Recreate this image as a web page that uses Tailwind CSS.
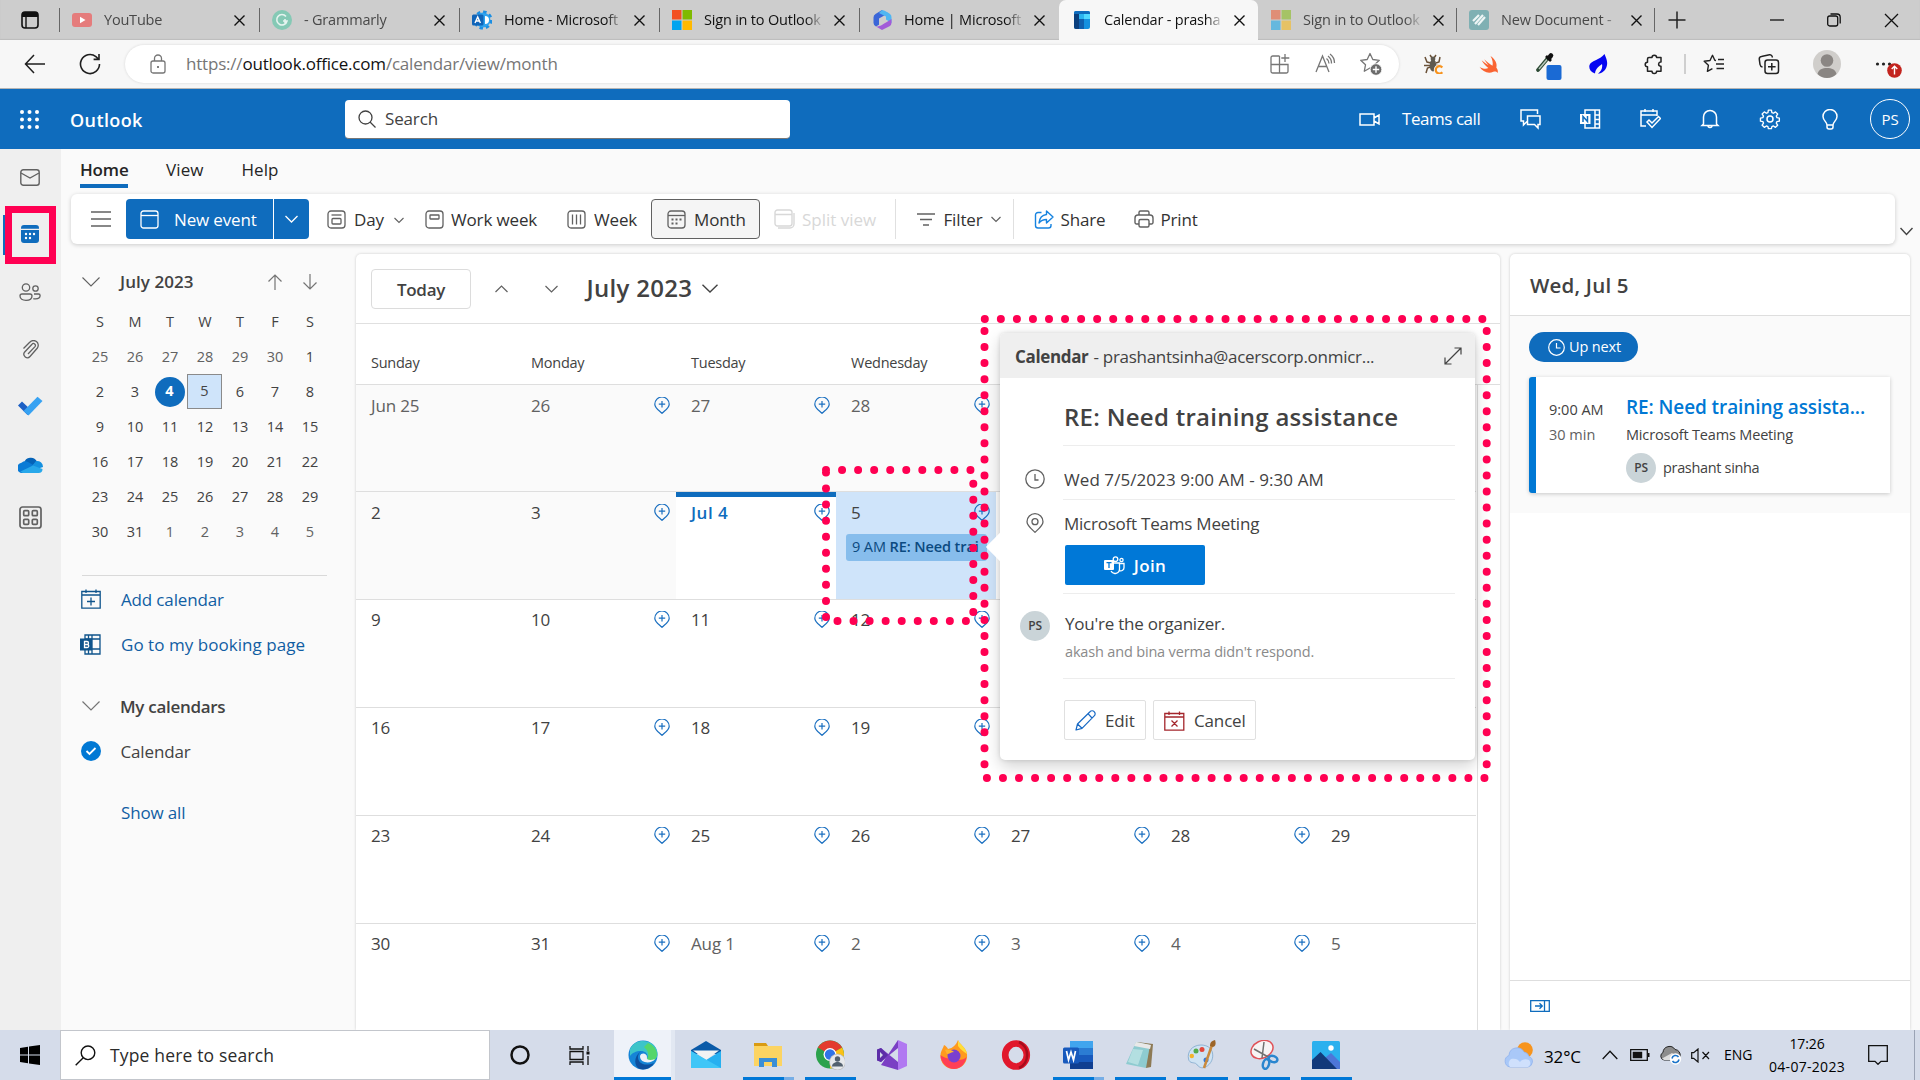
<!DOCTYPE html>
<html lang="en">
<head>
<meta charset="utf-8">
<title>Calendar - prashant sinha - Outlook</title>
<script src="https://cdn.jsdelivr.net/npm/@tailwindcss/browser@4"></script>
</head>
<body class="relative flex h-[1080px] w-[1920px] flex-col overflow-hidden bg-[#fafafa] font-['Open_Sans','Noto_Sans',sans-serif] text-[17px] leading-none tracking-[-0.15px] text-[#424242]">

<!-- Browser tab strip -->
<div class="flex h-10 shrink-0 items-stretch bg-[#cdcdcd] text-[14.5px] shadow-[inset_0_-1px_1px_#bdbdbd]">
  <div class="flex w-[59px] items-center justify-center">
    <svg width="18" height="18" viewBox="0 0 18 18"><rect x="1" y="1" width="16" height="16" rx="3" fill="none" stroke="#111" stroke-width="1.6"/><path d="M1 4a3 3 0 0 1 3-3h10a3 3 0 0 1 3 3v2H1z" fill="#111"/><path d="M5 6v11" stroke="#111" stroke-width="1.4"/></svg>
  </div>
  <div id="tabs" class="flex"></div>
  <div class="flex items-center"><i class="h-[24px] w-px bg-[#666]"></i></div>
  <svg class="mt-[10px] ml-[12px]" width="20" height="20" viewBox="0 0 20 20"><path d="M10 1.500v17M1.500 10h17" stroke="#222" stroke-width="1.500"/></svg>
  <div class="ml-auto flex items-center pr-[21px]">
    <svg width="14" height="14" viewBox="0 0 14 14"><path d="M0 7h14" stroke="#111" stroke-width="1.300"/></svg>
    <svg class="ml-[43px]" width="14" height="14" viewBox="0 0 14 14"><rect x=".7" y="3" width="10" height="10" rx="2" fill="none" stroke="#111" stroke-width="1.300"/><path d="M3.500 1h6.500a3.200 3.200 0 0 1 3.200 3.200v6.300" fill="none" stroke="#111" stroke-width="1.300"/></svg>
    <svg class="ml-[43px]" width="15" height="15" viewBox="0 0 15 15"><path d="M1 1l13 13M14 1 1 14" stroke="#111" stroke-width="1.300"/></svg>
  </div>
</div>

<!-- Address bar -->
<div class="flex h-[49px] shrink-0 items-center border-b border-[#b5b5b5] bg-[#f7f7f7] text-[#222]">
  <svg class="ml-[24px]" width="22" height="20" viewBox="0 0 22 20" fill="none" stroke="#1f1f1f" stroke-width="1.500"><path d="M10 1 1.500 10 10 19M1.500 10H21"/></svg>
  <svg class="ml-[33px]" width="22" height="22" viewBox="0 0 22 22" fill="none" stroke="#1f1f1f" stroke-width="1.600"><path d="M20.500 11a9.500 9.500 0 1 1-3.600-7.400l2.600 2.400M20 1v5.400h-5.400"/></svg>
  <div class="ml-[24px] flex h-[38px] w-[1274px] items-center rounded-full bg-white pr-[16px] shadow-[0_0_3px_#00000022]">
    <svg class="ml-[25px]" width="16" height="20" viewBox="0 0 16 20" fill="none" stroke="#767676" stroke-width="1.300"><rect x="1" y="7" width="14" height="12" rx="2"/><path d="M4.500 7V4.500a3.500 3.500 0 0 1 7 0V7"/><circle cx="8" cy="13" r="1" fill="#555" stroke="none"/></svg>
    <p class="mb-[2px] ml-[20px] tracking-[-0.2px] text-[#767676]">https://<span class="text-[#111]">outlook.office.com</span>/calendar/view/month</p>
    <div class="ml-auto flex items-center gap-[23px]">
      <svg width="22" height="22" viewBox="0 0 22 22" fill="none" stroke="#767676" stroke-width="1.300"><path d="M10.500 3H3.700A1.700 1.700 0 0 0 2 4.700v13.600A1.700 1.700 0 0 0 3.700 20h13.600a1.700 1.700 0 0 0 1.700-1.700V11.500H2M10.500 3v17M16 1v8M12.300 5h8"/></svg>
      <svg width="22" height="22" viewBox="0 0 22 22" fill="none" stroke="#767676" stroke-width="1.300"><path d="M2 19 8.500 3 15 19M4.200 13.500h8.600M12.500 5.500a6 6 0 0 1 2.500 5M14 3a9 9 0 0 1 3.500 7.500M16 1a11 11 0 0 1 4.500 9"/></svg>
      <svg width="24" height="24" viewBox="0 0 24 24"><path d="M11 1.500l2.800 6 6.500.8-4.800 4.500 1.200 6.400L11 16l-5.700 3.200 1.200-6.400L1.700 8.300l6.500-.8z" fill="none" stroke="#767676" stroke-width="1.300" stroke-linejoin="round"/><circle cx="17" cy="17.500" r="5.800" fill="#6b6b6b" stroke="#fff" stroke-width=".8"/><path d="M17 14.300v6.400M13.800 17.500h6.400" stroke="#fff" stroke-width="1.400"/></svg>
    </div>
  </div>
  <svg class="ml-[25px]" width="20" height="20" viewBox="0 0 20 20"><path d="M6 1 8 4M12 1 10 4M1 3l2 5 4 1M16 3l-1 5-3 1M0 11.500h6M2 19l1.500-5 3-1M12 11.500h5" stroke="#6a5138" stroke-width="1.500" fill="none"/><ellipse cx="9" cy="11.500" rx="3.300" ry="6" fill="#5f5a50"/><circle cx="9" cy="5" r="2.400" fill="#5f5a50"/><path d="M18.300 13.500a3.700 3.700 0 1 0 0 4.800" fill="none" stroke="#f7f7f7" stroke-width="4"/><path d="M18.300 13.500a3.700 3.700 0 1 0 0 4.800" fill="none" stroke="#f7931e" stroke-width="2.200"/></svg>
  <svg class="ml-[35px]" width="20" height="19" viewBox="0 0 20 19"><path d="M11.500 1c5 3.500 7 8 5.800 11.500 1.900 2.300 1.700 4.300 1.300 5.500-1.300-2-3-1.800-4.300-1.200C9.500 19 3.500 17 .5 11.800c3.300 2.200 6.600 2.600 8.800 1.200C6 10.500 3.800 7.500 2.600 5.200 5 7.300 7.300 9 9.500 10.300 7.800 8.200 6.300 6 5.200 4.200c3 2.900 5.800 5.100 8.300 6.500C14.200 8 13.500 4.500 11.500 1z" fill="#fa6432"/></svg>
  <svg class="mt-[4px] ml-[37px]" width="28" height="30" viewBox="0 0 28 30"><path d="M2 19 12 7" stroke="#2c4a34" stroke-width="3.600" stroke-linecap="round"/><path d="M3 18 11 8.500" stroke="#b9c8bd" stroke-width="1.400"/><path d="M10 5l5 5" stroke="#111" stroke-width="2.600"/><path d="M13 7l2-2.500" stroke="#111" stroke-width="4.600" stroke-linecap="round"/><rect x="10.500" y="14" width="15" height="15" rx="2" fill="#1a6ad4"/></svg>
  <svg class="ml-[25px]" width="19" height="20" viewBox="0 0 19 20"><path d="M15.500 0C17 4 19 7 17.800 12c-1 4.500-4.500 7-8.800 7.800 3.200-2.500 4.800-5.500 4-9.800-3 2.500-6.500 4.500-7 9.500C1.500 18 -.2 14.500.4 11.500 1.500 6.500 11 6 15.500 0z" fill="#0505f2"/></svg>
  <svg class="ml-[36px]" width="20" height="21" viewBox="0 0 20 21" fill="none" stroke="#222" stroke-width="1.500"><path d="M5 3.500h3a2.300 2.300 0 0 1 4.600 0H17v4.600a2 2 0 0 0-.5 4.200h.5v5h-4.400a2.300 2.300 0 0 1-4.600 0H3.500v-4.500a2.300 2.300 0 0 1 0-4.600V5A1.500 1.500 0 0 1 5 3.500z" stroke-linejoin="round"/></svg>
  <i class="ml-[20px] h-[20px] w-[1.5px] bg-[#cfcfcf]"></i>
  <svg class="ml-[17px]" width="22" height="20" viewBox="0 0 22 20" fill="none" stroke="#222" stroke-width="1.400"><path d="M13 6.500 11.800 6.300 9.500 1.300 7 6.500l-5.800.8 4.200 4-1 6 5-2.700M15 5.500h6M13 10h8M13.500 14.500H21" stroke-linejoin="round"/></svg>
  <svg class="ml-[33px]" width="22" height="22" viewBox="0 0 22 22" fill="none" stroke="#222" stroke-width="1.500"><rect x="7" y="7" width="13.500" height="13.500" rx="2.500"/><path d="M13.800 10v7.600M10 13.800h7.600M4.500 14A3 3 0 0 1 2 11.500L1.300 6.300a2.500 2.500 0 0 1 2.100-2.800l8-1.700A2.500 2.500 0 0 1 14.300 4v.5"/></svg>
  <svg class="ml-[33px]" width="28" height="28" viewBox="0 0 28 28"><circle cx="14" cy="14" r="14" fill="#d0cecb"/><circle cx="14" cy="10.500" r="6.300" fill="#8a8683"/><path d="M4.500 24c1-4.500 5-6 9.500-6s8.500 1.500 9.500 6c-2.500 2.600-6 4-9.500 4s-7-1.400-9.500-4z" fill="#8a8683"/></svg>
  <svg class="mt-[14px] ml-[34px]" width="28" height="28" viewBox="0 0 28 28"><g fill="#222"><circle cx="2.500" cy="7" r="1.600"/><circle cx="8.500" cy="7" r="1.600"/><circle cx="14.500" cy="7" r="1.600"/></g><circle cx="19.500" cy="13.500" r="7.300" fill="#c3241e"/><path d="M19.500 17.500v-8M16.700 12l2.800-2.800 2.800 2.800" stroke="#fff" stroke-width="1.400" fill="none"/></svg>
</div>

<!-- Outlook header -->
<div class="flex h-[60px] shrink-0 items-center bg-[#0f6cbd] text-white">
  <svg class="ml-[19px]" width="21" height="21" viewBox="0 0 21 21" fill="#fff"><g id="w"><circle cx="3" cy="3" r="2"/><circle cx="10.500" cy="3" r="2"/><circle cx="18" cy="3" r="2"/></g><use href="#w" y="7.500"/><use href="#w" y="15"/></svg>
  <p class="ml-[30px] mt-px w-[275px] text-[18px] font-semibold tracking-[0.4px]">Outlook</p>
  <div class="flex h-[39px] w-[445px] items-center rounded-[4px] border-b border-[#777] bg-white pl-[13px] text-[#424242]">
    <svg width="18" height="18" viewBox="0 0 18 18" fill="none" stroke="#424242" stroke-width="1.300"><circle cx="7.500" cy="7.500" r="6.500"/><path d="m12 12 5.500 5.500"/></svg>
    <span class="ml-[9px]">Search</span>
  </div>
  <svg class="ml-auto" width="21" height="13" viewBox="0 0 21 13" fill="none" stroke="#fff" stroke-width="1.500"><path d="M1 1h14v11H1zM15 5l5-3v9l-5-3"/></svg>
  <span class="mb-px ml-[22px] w-[98px] tracking-[-0.450px]">Teams call</span>
  <div class="flex w-[60px] justify-center"><svg width="22" height="22" viewBox="0 0 22 22" fill="none" stroke="#fff" stroke-width="1.500"><path d="M18.500 6V2H2v11h2.500v4L8 13.500M8.500 8H21v8.500h-2V20l-3.500-3.500h-7z"/></svg></div>
  <div class="flex w-[60px] justify-center"><svg width="22" height="22" viewBox="0 0 22 22" fill="none" stroke="#fff" stroke-width="1.500"><path d="M6 6V2h14.500v18H6v-4M16 2v18M16 7h4.500M16 11.500h4.500M16 16h4.500"/><rect x="1" y="6" width="10.500" height="10" fill="#fff" stroke="none"/><path d="M4 14V8.500l4.500 5V8" stroke="#0f6cbd"/></svg></div>
  <div class="flex w-[60px] justify-center"><svg width="22" height="22" viewBox="0 0 22 22" fill="none" stroke="#fff" stroke-width="1.500"><path d="M7 18H2V3h16v5M2 7h16M6 1v3M14 1v3"/><path d="m8 14 2-2 3 3 6.500-6.500 2 2L13 19.500z"/></svg></div>
  <div class="flex w-[60px] justify-center"><svg width="20" height="20" viewBox="0 0 20 20" fill="none" stroke="#fff" stroke-width="1.500"><path d="M3.500 15V8a6.500 6.500 0 0 1 13 0v7l1.500 1.500H2zM8 16.500a2 2 0 0 0 4 0"/></svg></div>
  <div class="flex w-[60px] justify-center"><svg width="22" height="22" viewBox="0 0 22 22" fill="none" stroke="#fff" stroke-width="1.500" stroke-linejoin="round"><path d="M9.300 1.500h3.400l.5 2.700 1.700.7 2.300-1.500 2.400 2.400-1.500 2.300.7 1.700 2.700.5v3.400l-2.700.5-.7 1.700 1.500 2.300-2.400 2.400-2.300-1.500-1.700.7-.5 2.200H9.300l-.5-2.200-1.700-.7-2.300 1.500-2.400-2.400 1.500-2.300-.7-1.700-2.700-.5v-3.400l2.700-.5.7-1.700L2.400 5.800l2.400-2.400 2.300 1.500 1.700-.7z" transform="translate(1 .8) scale(.9)"/><circle cx="11" cy="11" r="3"/></svg></div>
  <div class="flex w-[60px] justify-center"><svg width="16" height="21" viewBox="0 0 16 21" fill="none" stroke="#fff" stroke-width="1.500"><path d="M5 16c0-3-4-4.500-4-8.500a7 7 0 0 1 14 0c0 4-4 5.500-4 8.500zM5 16v2a2 2 0 0 0 2 2h2a2 2 0 0 0 2-2v-2"/></svg></div>
  <div class="flex w-[60px] justify-center"><div class="flex size-10 items-center justify-center rounded-full border border-white pt-px text-[15px]">PS</div></div>
</div>

<!-- Application -->
<div class="flex h-[881px] shrink-0">
  <!-- App rail -->
  <nav class="flex w-[61px] shrink-0 flex-col items-center bg-[#efefef]">
    <div class="flex h-[56px] items-center pr-px"><svg width="20" height="17" viewBox="0 0 20 17" fill="none" stroke="#616161" stroke-width="1.400"><rect x=".8" y=".8" width="18.400" height="15.400" rx="2.500"/><path d="m1 4 9 5 9-5"/></svg></div>
    <div class="relative flex h-[58px] w-full items-center justify-center pr-px">
      <i class="absolute left-[3px] top-[10px] h-[40px] w-[3px] bg-[#0f6cbd]"></i>
      <div class="absolute left-[5px] top-[1px] h-[58px] w-[51px] border-[7.500px] border-[#ff0052]"></div>
      <svg width="18" height="18" viewBox="0 0 18 18"><path d="M0 3a3 3 0 0 1 3-3h12a3 3 0 0 1 3 3v.8H0zM0 5h18v10a3 3 0 0 1-3 3H3a3 3 0 0 1-3-3z" fill="#0f6cbd"/><g fill="#fff"><circle cx="5" cy="9" r="1.200"/><circle cx="9" cy="9" r="1.200"/><circle cx="13" cy="9" r="1.200"/><circle cx="5" cy="13" r="1.200"/><circle cx="9" cy="13" r="1.200"/></g></svg>
    </div>
    <div class="flex h-[57px] items-center pr-px"><svg width="22" height="18" viewBox="0 0 22 18" fill="none" stroke="#616161" stroke-width="1.300"><circle cx="7" cy="4.500" r="3.700"/><circle cx="16.500" cy="5.500" r="2.700"/><path d="M1 13a2 2 0 0 1 2-2h8a2 2 0 0 1 2 2c0 3-2.500 4.300-6 4.300S1 16 1 13zM15 11h4.500a1.600 1.600 0 0 1 1.600 1.600c0 2.400-2 3.300-4.600 3.300-.9 0-1.500 0-2.200-.3"/></svg></div>
    <div class="flex h-[58px] items-center pr-px"><svg width="19" height="19" viewBox="0 0 19 19" fill="none" stroke="#616161" stroke-width="1.300"><path d="m2 8.500 6.200-6.200a4.800 4.800 0 0 1 7.500 6L8.500 16.500a3.500 3.500 0 0 1-5.500-4.300l7.500-8a1.900 1.900 0 0 1 3 2.400L6.500 14" transform="translate(.5 0)"/></svg></div>
    <div class="flex h-[56px] items-center"><svg width="25" height="20" viewBox="0 0 25 20"><path d="m0 9.500 4-4 9.500 9-4 4.500z" fill="#1c5fc4"/><path d="M5.500 15 19.500.7l5 4.300L10.500 19.500z" fill="#37a2f2"/></svg></div>
    <div class="flex h-[61px] items-center"><svg width="25" height="16" viewBox="0 0 25 16"><path d="M6 6a7 7 0 0 1 13-1.500l-6 6z" fill="#0563b8"/><path d="M5 16A5 5 0 0 1 3.500 5.800 6 6 0 0 1 10 5l7 4-7 7z" fill="#0a7bd6"/><path d="M18 4a6 6 0 0 1 7 6l-6 2-5-3z" fill="#1490df"/><path d="M2.500 14.500 15 8.500l9.500 3.500a4 4 0 0 1-4 4H5a4 4 0 0 1-2.500-1.500z" fill="#28a8ea"/></svg></div>
    <div class="flex h-[45px] items-center pr-px"><svg width="23" height="23" viewBox="0 0 23 23" fill="none" stroke="#616161" stroke-width="1.700"><rect x="1" y="1" width="21" height="21" rx="2.500"/><rect x="4.700" y="4.700" width="5" height="5" rx="1"/><rect x="13.300" y="4.700" width="5" height="5" rx="1"/><rect x="4.700" y="13.300" width="5" height="5" rx="1"/><rect x="13.300" y="13.300" width="5" height="5" rx="1"/></svg></div>
  </nav>

  <div class="flex min-w-0 flex-1 flex-col">
    <!-- Ribbon tabs -->
    <div class="flex h-[45px] shrink-0 pl-[19px] pt-[12px] text-[#242424]">
      <div class="flex h-[27px] w-[48px] flex-col justify-between border-b-4 border-[#0f6cbd] font-semibold"><span>Home</span></div>
      <span class="ml-[38px] tracking-[0.1px]">View</span>
      <span class="ml-[38px] tracking-[0px]">Help</span>
    </div>
    <!-- Command bar -->
    <div class="flex h-[60px] shrink-0">
      <div class="ml-[10px] flex h-[50px] w-[1824px] items-center rounded-[6px] bg-white text-[#323232] shadow-[0_1px_4px_#00000030]">
        <svg class="ml-[20px]" width="20" height="16" viewBox="0 0 20 16"><path d="M0 1h20M0 8h20M0 15h20" stroke="#616161" stroke-width="1.400"/></svg>
        <div class="ml-[15px] flex h-10 w-[183px] items-center rounded-[4px] bg-[#0f6cbd] text-white">
          <svg class="ml-[14px]" width="19" height="19" viewBox="0 0 19 19" fill="none" stroke="#fff" stroke-width="1.300"><rect x="1" y="1" width="17" height="17" rx="2.500"/><path d="M1 5.500h17"/></svg>
          <span class="ml-[15px] w-[99px]">New event</span>
          <i class="h-full w-px bg-white"></i>
          <svg class="ml-[11px]" width="13" height="8" viewBox="0 0 13 8" fill="none" stroke="#fff" stroke-width="1.300"><path d="m.5 1 6 6 6-6"/></svg>
        </div>
        <div class="ml-[18px] flex w-[98px] items-center">
          <svg width="19" height="19" viewBox="0 0 19 19" fill="none" stroke="#616161" stroke-width="1.300"><rect x="1" y="1" width="17" height="17" rx="3"/><path d="M4.500 5h10"/><rect x="5" y="8.500" width="9" height="5.500" rx="1"/></svg>
          <span class="ml-[8px] w-[40px]">Day</span>
          <svg class="mt-[3px]" width="10" height="7" viewBox="0 0 10 7" fill="none" stroke="#616161" stroke-width="1.100"><path d="m.5 1 4.500 4.500L9.500 1"/></svg>
        </div>
        <div class="flex w-[142px] items-center">
          <svg width="19" height="19" viewBox="0 0 19 19" fill="none" stroke="#616161" stroke-width="1.300"><rect x="1" y="1" width="17" height="17" rx="3"/><rect x="5" y="5" width="9" height="4" rx=".5"/></svg>
          <span class="ml-[7px]">Work week</span>
        </div>
        <div class="flex w-[84px] items-center">
          <svg width="19" height="19" viewBox="0 0 19 19" fill="none" stroke="#616161" stroke-width="1.300"><rect x="1" y="1" width="17" height="17" rx="3"/><path d="M5.500 4.500v10M9.500 4.500v10M13.500 4.500v10"/></svg>
          <span class="ml-[8px]">Week</span>
        </div>
        <div class="flex h-10 w-[109px] items-center rounded-[4px] border border-[#616161] bg-[#f5f5f5] pl-[15px]">
          <svg width="19" height="19" viewBox="0 0 19 19" fill="none" stroke="#616161" stroke-width="1.300"><rect x="1" y="1" width="17" height="17" rx="3"/><path d="M1 5.500h17"/><path d="M4.500 9.500h10M4.500 13.500h7" stroke-width="2" stroke-dasharray="2 2"/></svg>
          <span class="ml-[8px]">Month</span>
        </div>
        <div class="flex h-10 w-[135.5px] items-center border-r border-[#e0e0e0] pl-[14px] text-[#d8d8d8]">
          <svg width="21" height="20" viewBox="0 0 21 20" fill="none" stroke="#d8d8d8" stroke-width="1.400"><rect x="1" y="1" width="17" height="16" rx="2.500"/><path d="M1 5.500h17M4 19h12a4 4 0 0 0 4-4V4"/></svg>
          <span class="ml-[7px] tracking-[0px]">Split view</span>
        </div>
        <div class="flex h-10 w-[118px] items-center border-r border-[#e0e0e0] pl-[21px]">
          <svg width="18" height="13" viewBox="0 0 18 13" fill="none" stroke="#616161" stroke-width="1.600"><path d="M0 1h18M3 6.500h12M6 12h6"/></svg>
          <span class="ml-[9px] w-[47px]">Filter</span>
          <svg width="10" height="7" viewBox="0 0 10 7" fill="none" stroke="#616161" stroke-width="1.200"><path d="m.5 1 4.500 4.500L9.500 1"/></svg>
        </div>
        <div class="flex w-[120px] items-center pl-[20px]">
          <svg width="20" height="19" viewBox="0 0 20 19" fill="none" stroke="#1683e0" stroke-width="1.400" stroke-linejoin="round"><path d="M7.500 2.500H4a2.500 2.500 0 0 0-2.500 2.500v10.500A2.500 2.500 0 0 0 4 18h10.500a2.500 2.500 0 0 0 2.500-2.500V14"/><path d="M12.500 1 19 7l-6.500 6V9.500c-3.500 0-5.500 1-7.500 3.500.5-5 3.500-8 7.500-8.500z"/></svg>
          <span class="ml-[7px]">Share</span>
        </div>
        <div class="flex items-center">
          <svg width="20" height="18" viewBox="0 0 20 18" fill="none" stroke="#616161" stroke-width="1.400"><path d="M5 5V2.500A1.500 1.500 0 0 1 6.500 1h7A1.500 1.500 0 0 1 15 2.500V5M5 14H2.500A1.500 1.500 0 0 1 1 12.500V8a3 3 0 0 1 3-3h12a3 3 0 0 1 3 3v4.500a1.500 1.500 0 0 1-1.500 1.500H15"/><rect x="5" y="9.500" width="10" height="7.500" rx="1.500"/></svg>
          <span class="ml-[7px]">Print</span>
        </div>
      </div>
      <svg class="ml-[5px] mt-[33px]" width="13" height="9" viewBox="0 0 13 9" fill="none" stroke="#424242" stroke-width="1.400"><path d="m.5 1 6 6.500 6-6.500"/></svg>
    </div>

    <div class="flex min-h-0 flex-1">
      <!-- Sidebar -->
      <aside class="flex w-[295px] shrink-0 flex-col">
        <div class="flex h-[50px] items-center pl-[21px] pt-[5px]">
          <svg width="18" height="10" viewBox="0 0 18 10" fill="none" stroke="#616161" stroke-width="1.100"><path d="m.5.500 8.500 8.500L17.500.5"/></svg>
          <span class="ml-[20px] w-[148px] font-semibold tracking-[0.05px]">July 2023</span>
          <svg width="14" height="16" viewBox="0 0 14 16" fill="none" stroke="#757575" stroke-width="1.200"><path d="M7 16V1M.5 7.500 7 1l6.500 6.500"/></svg>
          <svg class="ml-[21px]" width="14" height="16" viewBox="0 0 14 16" fill="none" stroke="#757575" stroke-width="1.200"><path d="M7 0v15M.5 8.500 7 15l6.500-6.500"/></svg>
        </div>
        <div id="mini" class="ml-[21px] grid w-[246px] grid-cols-[repeat(7,35px)] auto-rows-[35px] text-[14.5px] tracking-[0px]"></div>
        <div class="ml-[21px] mt-[26px] h-px w-[245px] shrink-0 bg-[#d9d9d9]"></div>
        <div class="mt-[2px] flex h-[42px] shrink-0 items-center pl-[20px] text-[#115ea3]">
          <svg width="20" height="20" viewBox="0 0 20 20" fill="none" stroke="#0f548c" stroke-width="1.300"><path d="M.8 2.500h18.400v16.700H.8zM.8 6h18.400M5 .5V4M15 .5V4M10 8.500v8M6 12.500h8"/></svg>
          <span class="ml-[20px]">Add calendar</span>
        </div>
        <div class="mt-[3px] flex h-[42px] shrink-0 items-center pl-[19px] text-[#115ea3]">
          <svg width="21" height="21" viewBox="0 0 21 21" fill="none" stroke="#0f548c" stroke-width="1.300"><path d="M5 5V1h15v19H5v-4M5 5h15M12 1v19M8.500 1v4M12 15h8M8.500 16v4M12 5"/><rect x="0" y="4.500" width="12" height="12" fill="#0f548c" stroke="none"/><path d="M4.500 13.500v-6H7a1.400 1.400 0 0 1 0 3H4.500 7.300a1.500 1.500 0 0 1 0 3z" stroke="#fff"/></svg>
          <span class="ml-[20px] tracking-[0.04px]">Go to my booking page</span>
        </div>
        <div class="mt-[20px] flex h-[42px] shrink-0 items-center pl-[21px]">
          <svg width="18" height="10" viewBox="0 0 18 10" fill="none" stroke="#757575" stroke-width="1.200"><path d="m.5.500 8.500 8.500L17.500.5"/></svg>
          <span class="ml-[20px] font-semibold tracking-[-0.3px]">My calendars</span>
        </div>
        <div class="mt-[3px] flex h-[42px] shrink-0 items-center pl-[20px]">
          <svg width="20" height="20" viewBox="0 0 20 20"><circle cx="10" cy="10" r="10" fill="#0078d4"/><path d="m5.500 10 3 3 6-6" stroke="#fff" stroke-width="1.800" fill="none"/></svg>
          <span class="ml-[19.5px] mt-px">Calendar</span>
        </div>
        <div class="mt-[19px] flex h-[42px] shrink-0 items-center pl-[60px] text-[#115ea3]">Show all</div>
      </aside>

      <!-- Month view -->
      <main class="flex w-[1144px] shrink-0 flex-col rounded-t-[5px] bg-white shadow-[0_0_3px_#00000030]">
        <div class="flex h-[70px] shrink-0 items-center border-b border-[#e0e0e0] pl-[15px]">
          <div class="flex h-10 w-[100px] items-center justify-center rounded-[4px] border border-[#dcdcdc] pt-px font-semibold tracking-[-0.3px]">Today</div>
          <svg class="ml-[23.5px]" width="13" height="8" viewBox="0 0 13 8" fill="none" stroke="#616161" stroke-width="1.200"><path d="m.5 7 6-6 6 6"/></svg>
          <svg class="ml-[37px]" width="13" height="8" viewBox="0 0 13 8" fill="none" stroke="#616161" stroke-width="1.200"><path d="m.5 1 6 6 6-6"/></svg>
          <span class="mb-[2px] ml-[29px] text-[24px] font-semibold tracking-[0.3px]">July 2023</span>
          <svg class="ml-[10px]" width="16" height="9" viewBox="0 0 16 9" fill="none" stroke="#424242" stroke-width="1.400"><path d="m.5.700 7.500 7.300L15.500.7"/></svg>
        </div>
        <div class="grid h-[61px] shrink-0 grid-cols-[repeat(7,160px)] border-b border-[#dedede] pt-[32px] text-[14.5px] tracking-[-0.25px]">
          <span class="pl-[15px]">Sunday</span><span class="pl-[15px]">Monday</span><span class="pl-[15px]">Tuesday</span><span class="pl-[15px]">Wednesday</span>
        </div>
        <div id="month" class="grid min-h-0 w-[1122px] flex-1 grid-cols-[repeat(7,160px)] grid-rows-[106px_repeat(5,107.9px)] overflow-hidden border-r border-[#dedede]"></div>
      </main>

      <!-- Agenda -->
      <section class="ml-[10px] flex w-[400px] shrink-0 flex-col rounded-t-[5px] bg-white shadow-[0_0_3px_#00000030]">
        <h2 class="flex h-[62px] items-center border-b border-[#dedede] pl-[20px] pt-[2px] text-[20.5px] font-semibold tracking-[0.2px]">Wed, Jul 5</h2>
        <div class="h-[197px] bg-[#fafafa] pl-[19px] pt-[16px]">
          <div class="flex h-[30px] w-[109px] items-center rounded-full bg-[#0f6cbd] pl-[19px] pt-px text-[14.5px] text-white">
            <svg width="17" height="17" viewBox="0 0 17 17" fill="none" stroke="#fff" stroke-width="1.200"><circle cx="8.500" cy="8.500" r="7.800"/><path d="M8.500 4v5h4"/></svg>
            <span class="ml-[4px]">Up next</span>
          </div>
          <div class="mt-[15px] flex h-[116px] w-[361px] rounded-l-[3px] border-l-[7px] border-[#0078d4] bg-white text-[14.5px] shadow-[0_1px_4px_#00000033]">
            <div class="w-[90px] pl-[13px] pt-[26px]">
              <p class="tracking-[0px]">9:00 AM</p>
              <p class="mt-[10px] tracking-[0px] text-[#616161]">30 min</p>
            </div>
            <div class="pt-[21px]">
              <p class="text-[19px] font-semibold tracking-[-0.09px] text-[#0078d4]">RE: Need training assista...</p>
              <p class="mt-[11px] tracking-[-0.17px]">Microsoft Teams Meeting</p>
              <div class="mt-[10px] flex items-center"><div class="flex size-[30px] items-center justify-center rounded-full bg-[#cad4d8] text-[12px] font-semibold">PS</div><span class="ml-[7px] mt-px tracking-[-0.33px]">prashant sinha</span></div>
            </div>
          </div>
        </div>
        <div class="mt-auto flex h-[50px] items-center border-t border-[#dedede] pl-[20px]">
          <svg width="20" height="12" viewBox="0 0 20 12" fill="none" stroke="#0f6cbd" stroke-width="1.300"><path d="M.7.700h18.600v10.600H.7zM14.500.7v10.600M5 6h7M9.500 3.200 12.300 6 9.500 8.800"/></svg>
        </div>
      </section>
    </div>
  </div>
</div>

<!-- Windows taskbar -->
<div class="flex h-[50px] shrink-0 items-center bg-[#d5dcea] text-black">
  <div class="flex w-[60px] justify-center"><svg width="20" height="20" viewBox="0 0 20 20"><path d="M0 3l8-1.200v7.700H0zM9 1.600 20 0v9.500H9zM0 10.500h8v7.700L0 17zM9 10.500h11V20L9 18.400z"/></svg></div>
  <div class="flex h-full w-[430px] items-center border border-[#c3c6cc] bg-white pl-[14px]">
    <svg width="21" height="21" viewBox="0 0 21 21" fill="none" stroke="#111" stroke-width="1.400"><circle cx="13" cy="7.800" r="6.800"/><path d="M8.500 12.500.7 20.300"/></svg>
    <span class="ml-[14px] mt-px text-[17.5px] tracking-[0.160px] text-[#2b2b2b]">Type here to search</span>
  </div>
  <div class="flex w-[60px] justify-center"><svg width="20" height="20" viewBox="0 0 20 20"><circle cx="10" cy="10" r="8.500" fill="none" stroke="#111" stroke-width="2.500"/></svg></div>
  <div class="flex w-[60px] justify-center"><svg width="22" height="20" viewBox="0 0 22 20" fill="none" stroke="#111" stroke-width="1.300"><path d="M1 1v3h13V1M1 20v-3h13v3M1 6.500h13v8H1zM19 1v5M19 11v9"/><rect x="17.500" y="6.500" width="3" height="3" fill="#111" stroke="none"/></svg></div>
  <div id="apps" class="flex h-full pl-[4px]"></div>
  <div class="ml-auto flex h-full items-center">
    <svg width="30" height="28" viewBox="0 0 30 28"><circle cx="21" cy="9" r="7.800" fill="#f7941d"/><path d="M6 26a6 6 0 0 1-1-11.500A8 8 0 0 1 20 11a6 6 0 0 1 5 4.500A5.500 5.500 0 0 1 24 26z" fill="#a9c8f8" stroke="#8fb2ef" stroke-width=".8"/><path d="M6 26a5.500 5.500 0 0 1 1-8c4-1 7 0 9 3 2-3 6-3.500 9-2a4.500 4.500 0 0 1-1 7z" fill="#cfe0fc"/></svg>
    <span class="ml-[10px] mt-[2px] w-[58px]">32°C</span>
    <svg width="16" height="10" viewBox="0 0 16 10" fill="none" stroke="#111" stroke-width="1.300"><path d="M.7 9 8 1.300 15.300 9"/></svg>
    <svg class="ml-[12px]" width="20" height="12" viewBox="0 0 20 12"><path d="M.7.700h16.600v10.600H.7z" fill="none" stroke="#111" stroke-width="1.300"/><path d="M2.700 2.700h9.500v6.600H2.700zM18 4h1.500v4H18z" fill="#111"/></svg>
    <svg class="ml-[10px]" width="22" height="20" viewBox="0 0 22 20"><path d="M4 15A4 4 0 0 1 3 7.500 6.500 6.500 0 0 1 15 4.500a5.500 5.500 0 0 1 5 7L17 15z" fill="#8d8d8d" stroke="#222" stroke-width="1"/><path d="M2 13.500 12 8l7 5-4 2H4z" fill="#ddd"/><circle cx="15.500" cy="14" r="5.700" fill="#fff"/><path d="M12 13.500a3.600 3.600 0 0 1 6.500-1.500M19 14.500a3.600 3.600 0 0 1-6.500 1.500" fill="none" stroke="#1a73c9" stroke-width="1.600"/></svg>
    <svg class="ml-[9px]" width="19" height="15" viewBox="0 0 19 15" fill="none" stroke="#111" stroke-width="1.200"><path d="M.7 4.700h2L7 1v13L2.700 10.300h-2zM11.500 4l6.500 7M18 4l-6.500 7"/></svg>
    <span class="ml-[14px] w-[30px] text-[14px] tracking-[0px]">ENG</span>
    <div class="ml-[11px] flex w-[84px] flex-col items-center gap-[9px] text-[14px] tracking-[0.3px]"><span class="tracking-[-0.1px]">17:26</span><span>04-07-2023</span></div>
    <svg class="ml-[19px]" width="20" height="20" viewBox="0 0 20 20" fill="none" stroke="#111" stroke-width="1.300"><path d="M.7.700h18.600v15.600H13L10 19.300 7 16.300H.7z"/></svg>
    <i class="ml-[26px] h-[50px] w-px bg-[#9aa3b5]"></i><i class="w-[5px]"></i>
  </div>
</div>

<!-- Event callout -->
<div class="absolute left-[1000px] top-[333px] h-[427px] w-[475px] rounded-[5px] bg-white shadow-[0_6px_16px_#0000002e,0_0_4px_#00000020]">
  <i class="absolute -left-[10px] top-[204px] size-[20px] rotate-45 bg-white"></i>
  <div class="relative flex h-[45px] items-center rounded-t-[5px] bg-[#efefef] pl-[15px]">
    <span class="mt-[2px] font-bold tracking-[-0.35px]">Calendar</span><span class="ml-[5px] mt-[2px] tracking-[-0.280px]">- prashantsinha@acerscorp.onmicr...</span>
    <svg class="ml-auto mr-[13px]" width="18" height="18" viewBox="0 0 18 18" fill="none" stroke="#424242" stroke-width="1.200"><path d="M1 17 17 1M10.500 1H17v6.500M1 10.500V17h6.500"/></svg>
  </div>
  <div class="relative ml-[63px] w-[392px]">
    <h1 class="flex h-[68px] items-center border-b border-[#ededed] pl-[1px] pt-[11px] text-[24px] font-semibold tracking-[0.280px]">RE: Need training assistance</h1>
    <div class="flex h-[54px] items-center border-b border-[#ededed] pl-[2px] pt-[13px]">
      <svg class="-ml-[40px] mr-[18px]" width="20" height="20" viewBox="0 0 20 20" fill="none" stroke="#616161" stroke-width="1.300"><circle cx="10" cy="10" r="9.200"/><path d="M10 5v6h3.500"/></svg>
      <span class="ml-px tracking-[0.070px]">Wed 7/5/2023 9:00 AM - 9:30 AM</span>
    </div>
    <div class="h-[94px] border-b border-[#ededed] pl-[2px] pt-[12px]">
      <div class="flex h-[22px] items-center">
        <svg class="-ml-[39px] mr-[19px]" width="18" height="20" viewBox="0 0 18 20" fill="none" stroke="#616161" stroke-width="1.300"><path d="M9 19.300C5 15.500 1 12.500 1 8.700a8 8 0 0 1 16 0c0 3.800-4 6.800-8 10.600z"/><circle cx="9" cy="8.700" r="3"/></svg>
        <span class="ml-px mt-px tracking-[-0.23px]">Microsoft Teams Meeting</span>
      </div>
      <div class="mt-[11px] flex h-10 w-[140px] items-center justify-center rounded-[2px] bg-[#0078d7] font-semibold text-white">
        <svg width="21" height="19" viewBox="0 0 21 19" fill="none" stroke="#fff" stroke-width="1.300"><rect x="0" y="4" width="10" height="10" rx="1" fill="#fff" stroke="none"/><path d="M2.500 6.700h5M5 6.700V12" stroke="#0078d7"/><circle cx="11.500" cy="3.200" r="2.300"/><circle cx="17.500" cy="4" r="1.600"/><path d="M10 7h5.500v6a4.500 4.500 0 0 1-8.500 2M15.500 7.500H20v4a3.300 3.300 0 0 1-4.500 3.200"/></svg>
        <span class="ml-[9px] tracking-[0.4px]">Join</span>
      </div>
    </div>
    <div class="flex h-[85px] border-b border-[#ededed] pt-[17px]">
      <div class="-ml-[43px] flex size-[30px] items-center justify-center rounded-full bg-[#cad4d8] text-[12px] font-semibold">PS</div>
      <div class="ml-[15px] pt-[4px]"><p class="tracking-[-0.23px]">You're the organizer.</p><p class="mt-[13px] text-[14.5px] tracking-[-0.17px] text-[#8a8a8a]">akash and bina verma didn't respond.</p></div>
    </div>
    <div class="ml-px mt-[21px] flex gap-[7px]">
      <div class="flex h-10 w-[82px] items-center rounded-[2px] border border-[#e0e0e0] pl-[10px] pt-px"><svg width="21" height="21" viewBox="0 0 21 21" fill="none" stroke="#1668c4" stroke-width="1.200" stroke-linejoin="round"><path d="M1 20l1.500-6L15 1.700a2.800 2.800 0 0 1 4.200 0 2.800 2.800 0 0 1 0 4.200L7 18.300zM13 3.700 17 8M2.500 14 7 18.300"/></svg><span class="ml-[9px]">Edit</span></div>
      <div class="flex h-10 w-[103px] items-center rounded-[2px] border border-[#e0e0e0] pl-[10px] pt-px"><svg width="21" height="20" viewBox="0 0 21 20" fill="none" stroke="#a4262c" stroke-width="1.300"><path d="M.8 2.500h19v16.700H.8zM.8 6h19M5 .5V4M15.500 .5V4M7.500 9.500l6 6M13.500 9.500l-6 6"/></svg><span class="ml-[9px]">Cancel</span></div>
    </div>
  </div>
</div>

<!-- Dotted highlights -->
<svg class="absolute left-0 top-0" width="1920" height="1080" viewBox="0 0 1920 1080" fill="none" stroke="#ff0052" stroke-width="8" stroke-linecap="round" stroke-dasharray="0 16.050">
  <path d="M984.800 319H1484M986.900 778H1486M984.500 331V765M1486.700 331V765"/>
  <path d="M826 470H972M837.500 621H967M826 472.500V618M973.300 483.700V613"/>
</svg>

<script>
const el = id => document.getElementById(id);
const ms = '<svg width="20" height="20" viewBox="0 0 20 20"><path d="M0 0h9.500v9.500H0z" fill="#f25022"/><path d="M10.500 0H20v9.500h-9.500z" fill="#7fba00"/><path d="M0 10.500h9.500V20H0z" fill="#00a4ef"/><path d="M10.500 10.500H20V20h-9.500z" fill="#ffb900"/></svg>';
const tabs = [
  ['YouTube', '<svg width="20" height="20" viewBox="0 0 20 20"><rect y="3" width="20" height="14" rx="3" fill="#e57c7c"/><path d="m8 6.800 5.500 3.200L8 13.200z" fill="#fff"/></svg>', 1],
  ['- Grammarly', '<svg width="20" height="20" viewBox="0 0 20 20"><circle cx="10" cy="10" r="10" fill="#85c9b5"/><path d="M14 6.500A5.200 5.200 0 1 0 15 11h-4M13 9v4" stroke="#e6f4f0" stroke-width="1.600" fill="none"/></svg>', 1],
  ['Home - Microsoft', '<svg width="20" height="20" viewBox="0 0 20 20"><circle cx="11" cy="10" r="7.500" fill="#2fa3ee"/><circle cx="11" cy="10" r="8.300" fill="none" stroke="#1c8fe3" stroke-width="2.500" stroke-dasharray="3.500 3"/><rect y="4.500" width="11.500" height="11" rx="1.500" fill="#1064b8"/><path d="m3 13 2.700-6 2.700 6M4 11h3.500" stroke="#fff" stroke-width="1.400" fill="none"/><path d="M13 6v8a4 4 0 0 0 0-8" fill="#fff"/></svg>', 0],
  ['Sign in to Outlook', ms, 0],
  ['Home | Microsoft', '<svg width="19" height="20" viewBox="0 0 19 20"><path d="M9 0 2.500 4A4 4 0 0 0 .5 7.500v5.500A4 4 0 0 0 3 16.500l3-1.800V8.500L13 4.500z" fill="#3b66d8"/><path d="M9 0c2 0 7 3 8 4a4 4 0 0 1 1.500 3.500V13L13 9.500V6.500L6 3z" fill="#4fb6f2"/><path d="M18.500 9v4a4 4 0 0 1-2 3.300L9 20l-6-3.500c3 .3 4-.5 10-4z" fill="#a25bd8"/></svg>', 0],
  ['Calendar - prasha', '<svg width="16" height="18" viewBox="0 0 16 18"><rect width="16" height="18" rx="2" fill="#1490df"/><path d="M0 3h5v15H2a2 2 0 0 1-2-2z" fill="#0a3f7d"/><path d="M5 8h5v10H5z" fill="#0f5fae"/><path d="M5 3h5v5H5z" fill="#2ab4f0"/><path d="M10 3h6v5h-6z" fill="#50d9ff"/><path d="M2 0h12a2 2 0 0 1 2 2v1H0V2a2 2 0 0 1 2-2z" fill="#0f6cbd"/></svg>', 0],
  ['Sign in to Outlook', '<div class="opacity-50">' + ms + '</div>', 1],
  ['New Document -', '<svg width="20" height="20" viewBox="0 0 20 20"><rect width="20" height="20" rx="3" fill="#7fb0b3"/><path d="m4 11 6-6M6 14l8-9M9 15l7-8" stroke="#edf5f5" stroke-width="2.200"/></svg>', 1]
];
el('tabs').innerHTML = tabs.map(([t, icon, dim], i) => `
  <div class="flex items-center ${i < 5 ? 'w-[200px]' : i === 5 ? 'w-[199px] rounded-t-[7px] bg-[#f7f7f7]' : 'w-[198px]'}">
    <i class="h-[24px] w-px ${i === 5 || i === 6 ? '' : 'bg-[#666]'}"></i>
    <div class="ml-[12px] flex w-[20px] shrink-0 justify-center">${icon}</div>
    <div class="ml-[12px] w-[120px] shrink-0 overflow-hidden whitespace-nowrap py-1 tracking-[-0.2px] mask-r-from-85% ${dim ? 'text-[#484848]' : 'text-[#111]'}">${t}</div>
    <svg class="ml-[10px] shrink-0" width="11" height="11" viewBox="0 0 11 11"><path d="m.5.500 10 10M10.500.5l-10 10" stroke="#111" stroke-width="1.400"/></svg>
  </div>`).join('');

const mini = ['S','M','T','W','T','F','S',25,26,27,28,29,30];
for (let d = 1; d <= 31; d++) mini.push(d);
for (let d = 1; d <= 5; d++) mini.push(d);
el('mini').innerHTML = mini.map((d, i) => {
  const cell = i === 16 ? '<b class="flex size-[30px] items-center justify-center rounded-full bg-[#0f6cbd] text-white">4</b>'
    : i === 17 ? '<span class="flex size-[35px] items-center justify-center border border-[#8a8a8a] bg-[#cfe4fa]">5</span>' : d;
  return `<div class="flex items-center justify-center ${i === 16 || i === 17 ? '' : 'pt-px pl-px'} ${(i > 6 && i < 13) || i > 43 ? 'text-[#616161]' : ''}">${cell}</div>`;
}).join('');

const pin = '<svg class="ml-auto mr-[6.5px]" width="16" height="17" viewBox="0 0 16 17" fill="none" stroke="#1a6fc0" stroke-width="1.200"><path d="M8 16.300C4.500 13 .8 10.800.8 7.200a7.200 7.200 0 0 1 14.400 0c0 3.600-3.700 5.800-7.200 9.100zM8 4v6.500M4.800 7.200h6.400"/></svg>';
const days = ['Jun 25',26,27,28,29,30,'Jul 1',2,3,'Jul 4'];
for (let d = 5; d <= 31; d++) days.push(d);
days.push('Aug 1',2,3,4,5);
// Cells that the event callout hides keep their background only
const hidden = i => i < 28 && i % 7 > 3;
el('month').innerHTML = days.map((d, i) => `
  <div class="border-[#dedede] ${i > 6 ? 'border-t' : ''} ${i < 9 ? 'bg-[#fafafa]' : i === 10 ? 'bg-[#cfe4fa]' : 'bg-white'}">
    <div class="flex h-[40px] items-center pl-[15px] ${i === 9 ? 'shadow-[inset_0_5px_0_#0f6cbd] font-semibold tracking-[0.5px] text-[#0f6cbd]' : ''} ${i < 7 || i > 36 ? 'text-[#616161]' : ''}">
      ${hidden(i) ? '' : `<span>${d}</span>${i % 7 > 0 && i % 7 < 6 ? pin : ''}`}
    </div>
    ${i === 10 ? '<div class="ml-[10px] mt-[2px] flex h-[27px] w-[141px] items-center overflow-hidden whitespace-nowrap rounded-[3px] bg-[#87bdec] pl-[6px] text-[14.5px] tracking-[-0.1px] text-[#0b4a80]">9 AM&nbsp;<span class="font-semibold">RE: Need trai</span></div>' : ''}
  </div>`).join('');

const s = body => `<svg width="30" height="30" viewBox="0 0 30 30">${body}</svg>`;
const apps = [
  [s('<circle cx="15" cy="15" r="14.500" fill="#1584d6"/><path d="M2 9C6 0 17-1 24 3.500c6 4.500 7 12 3.500 15.500-2 2-7 2-8.500 0 2-4-1-8-6-8-5 0-9 2-11 5z" fill="#3cc4c9"/><path d="M20 3c8 3 11 11 7.500 16-2 2-7 2-8.500 0 2-3 2-8-3-12z" fill="#54d66b"/><path d="M10 17c0 6 6 10 16 6-3 5-9 7.500-14 6C6 27 5 17 13 11c-2 2-3 4-3 6z" fill="#0d4f9e"/><path d="M12 16c1-4 7-3 7 1-1 3 3 4 8 2-3 5-15 5-15-3z" fill="#edf1f8"/>'), 1],
  [s('<path d="M0 10 15 1l15 9v4H0z" fill="#0a5aa8"/><path d="M0 11v17h30V11l-15 9z" fill="#27b0f0"/><path d="M2 10.500h26L15 20z" fill="#f3f3f3"/><path d="M0 28h30L0 11z" fill="#3fc6f7"/>'), 0],
  [s('<path d="M1 3h12l2 3H1z" fill="#d99b13"/><path d="M1 6h28v20H1z" fill="#fcd462"/><path d="M6 27V18h18v9h-5v-5h-8v5z" fill="#3b8fd6"/>'), 2],
  [s('<circle cx="15" cy="14.500" r="14" fill="#2ba24c"/><path d="M15 14.500 2.900 7.500A14 14 0 0 1 27.100 7.500z" fill="#e33b2e"/><path d="M15 14.500 27.100 7.500A14 14 0 0 1 15 28.500z" fill="#fbc116"/><circle cx="15" cy="14.500" r="6.500" fill="#fff"/><circle cx="15" cy="14.500" r="5.200" fill="#2f73e8"/><circle cx="22.500" cy="22" r="8" fill="#e6e8eb" stroke="#aaa" stroke-width=".6"/><circle cx="22.500" cy="19" r="2.700" fill="#52606e"/><path d="M17 26.500c0-6 11-6 11 0z" fill="#52606e"/>'), 1],
  [s('<path d="M21 0 30 4v22l-9 4z" fill="#b179f1"/><path d="M21 0v8L4 22l-4-2V10l4-2 17 14v8L4 25" fill="#7b3fc4"/><path d="M0 9.500 4 8l7 7-7 7-4-1.500z" fill="#5d2ea8"/><path d="M21 9v12l-7-6zM3 12v6l3-3z" fill="#d5dcea"/>'), 0],
  [s('<path d="M19 0c1 4 8 7 9 14 1 8-5 15-13 15S1 23 1.500 15C2 10 4 9 5 5c2 1 3 2 4 4 5-1 8-4 10-9z" fill="#ff9a1f"/><path d="M1.500 15c2 3 22 8 26 2-1 7-6 12-12.500 12S1.500 23 1.500 15z" fill="#ff3f55"/><circle cx="15" cy="16" r="6.500" fill="#7a3fd0"/><path d="M6 10c3-1 7 0 9 2-3 0-4 2-7 2z" fill="#ffb52e"/><path d="M19 0c1 4 8 7 9 14-3-2-6-4-9-8z" fill="#ffde3a"/>'), 0],
  [s('<ellipse cx="15" cy="15" rx="10.800" ry="11.500" fill="none" stroke="#e1182c" stroke-width="6.600"/><path d="M18 2a13 14 0 0 1 0 26" fill="none" stroke="#a60d1d" stroke-width="2.500"/>'), 0],
  [s('<rect x="7" y="1" width="23" height="28" rx="1.500" fill="#2b7cd3"/><path d="M7 1h23v7H7z" fill="#41a5ee"/><path d="M7 15h23v7H7z" fill="#185abd"/><path d="M7 22h23v7H7z" fill="#103f91"/><rect y="7.500" width="16" height="16" rx="1.500" fill="#185abd"/><path d="m3.500 11 2 9 2.500-8 2.500 8 2-9" fill="none" stroke="#fff" stroke-width="1.700"/>'), 2],
  [s('<path d="M12 2 28 4 26 27 21 28z" fill="#8d7a55"/><path d="M11 2 25 5 21 28 1 24z" fill="#8ecbd0"/><path d="m11 2 15 3-1 4L9 6z" fill="#e8e8e8"/><path d="M8 9 3 22l10 3 5-15z" fill="#c3e7e8" opacity=".7"/>'), 1],
  [s('<path d="M14 5C5 5 0 12 1.500 19c1 5 6 3 8 5 2 3 5 5 9 3 6-3 8-9 7-14S20 5 14 5z" fill="#cfe3f3" stroke="#7fa7cc" stroke-width=".8"/><circle cx="9" cy="11" r="2.500" fill="#54ab4d"/><circle cx="4.800" cy="16" r="2.200" fill="#f3b32b"/><circle cx="15" cy="9.500" r="2.500" fill="#e2483d"/><circle cx="19" cy="20" r="2.500" fill="#3b78d0"/><path d="M17 28 25 5" stroke="#c98a3d" stroke-width="2.500"/><path d="M23 6c0-3 1-5 5-6 1 3 1 6-2 7z" fill="#9c6427"/>'), 1],
  [s('<ellipse cx="13" cy="9.500" rx="11.500" ry="8.500" transform="rotate(-25 13 9.500)" fill="#f7f4f4" stroke="#e05258" stroke-width="1.500"/><path d="M13 18 15 2M5 9l16 9" stroke="#707070" stroke-width="1.500"/><ellipse cx="17" cy="24" rx="3" ry="5" fill="none" stroke="#2a86cf" stroke-width="2.500" transform="rotate(15 17 24)"/><ellipse cx="24" cy="19" rx="4.500" ry="3" fill="none" stroke="#2a86cf" stroke-width="2.500" transform="rotate(20 24 19)"/>'), 1],
  [s('<rect x="1" y="1" width="28" height="28" rx="1.500" fill="#2bb0ee"/><path d="m15 17 5-4 9 9v7H15z" fill="#4d76d8"/><path d="M1 20 9.500 12 26 29H1z" fill="#12397a"/><circle cx="20" cy="8" r="2.700" fill="#fff"/>'), 1]
];
el('apps').innerHTML = apps.map(([icon, run], i) => `
  <div class="relative flex h-full items-center justify-center ${i === 0 ? 'w-[61px] border-r-[4px] border-[#e2e8f2] bg-[#eef2f9]' : 'w-[62px]'}">
    ${icon}
    ${run ? `<i class="absolute bottom-0 h-[3px] bg-[#0078d7] ${i === 0 ? 'left-0 w-[57px]' : 'left-[6px] w-[51px]'} ${run === 2 ? 'border-r-[10px] border-[#76aee6]' : ''}"></i>` : ''}
  </div>`).join('');
</script>
</body>
</html>
